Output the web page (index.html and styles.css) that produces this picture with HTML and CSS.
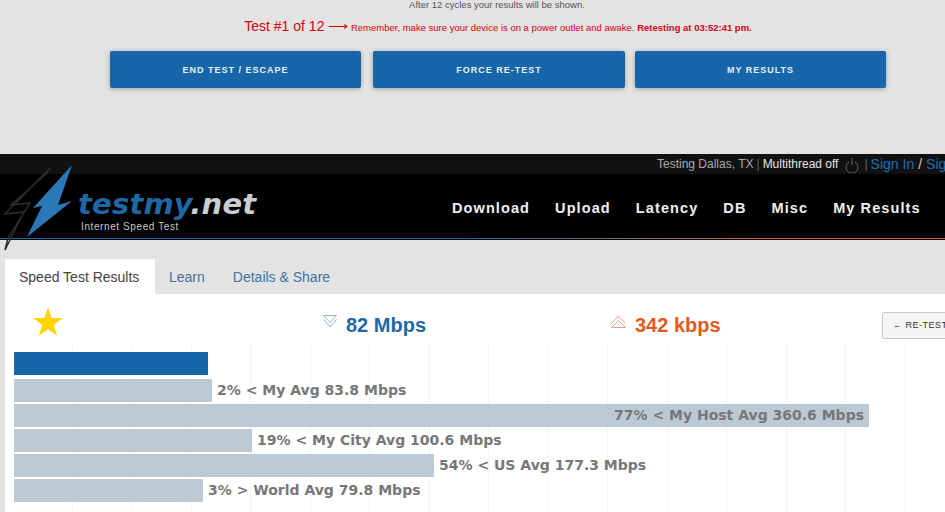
FILE: index.html
```html
<!DOCTYPE html>
<html lang="en">
<head>
<meta charset="utf-8">
<title>testmy.net</title>
<link rel="stylesheet" href="styles.css">
</head>
<body>
<section class="status">
  <p class="after">After 12 cycles your results will be shown.</p>
  <p class="notice"><span class="count">Test #1 of 12 ⟶</span> Remember, make sure your device is on a power outlet and awake. <b>Retesting at 03:52:41 pm.</b></p>
  <div class="actions">
    <a class="btn">END TEST / ESCAPE</a>
    <a class="btn">FORCE RE-TEST</a>
    <a class="btn">MY RESULTS</a>
  </div>
</section>
<header class="header">
  <div class="topbar">
    <span>Testing Dallas, TX</span><span class="sep">|</span><span class="white">Multithread off</span>
    <svg class="power" viewBox="0 0 14 16" width="14" height="16"><path d="M4 5a6 6 0 1 0 6 0M7 1v7" fill="none" stroke="#666" stroke-width="1"/></svg>
    <span class="sep">|</span><a class="link">Sign In</a><span class="slash">/</span><a class="link">Sign Up</a>
  </div>
  <div class="mainbar">
    <nav class="nav">
      <a>Download</a><a>Upload</a><a>Latency</a><a>DB</a><a>Misc</a><a>My Results</a>
    </nav>
  </div>
  <div class="logo">
    <svg class="bolt" viewBox="0 0 76 90" width="76" height="90">
      <path d="M50 18 5 64 24 62 5 100 8 88 30 53 11 55 46 24Z" fill="none" stroke="#2c2c2c" stroke-width="1.5" transform="translate(0 -14)"/>
      <path d="M72 1 58 41 72 37 27 73 42 42 33 44Z" fill="#2a78b8"/>
    </svg>
    <span class="brand"><span class="brand-a">testmy</span><span class="brand-b">.net</span></span>
    <span class="tag">Internet Speed Test</span>
  </div>
</header>
<main class="content">
  <div class="tabs">
    <a class="tab active">Speed Test Results</a>
    <a class="tab">Learn</a>
    <a class="tab">Details &amp; Share</a>
  </div>
  <div class="panel">
    <div class="summary">
      <svg class="star" viewBox="0 0 30 30" width="30" height="30"><path d="M15 0l3.6 11H30l-9.3 6.8L24.3 29 15 22.200 5.700 29l3.600-11.200L0 11h11.400Z" fill="#ffd400"/></svg>
      <div class="speed down">
        <svg viewBox="0 0 14 13" width="14" height="13"><path d="M.5.500h13L7 7.500ZM.5 4.500 7 12l6.500-7.500" fill="none" stroke="#8fb0cc"/></svg>
        <span>82 Mbps</span>
      </div>
      <div class="speed up">
        <svg viewBox="0 0 15 13" width="15" height="13"><path d="M.5 12.500h14L7.500 5.500ZM.5 8.500 7.500 1l7 7.500" fill="none" stroke="#eda184"/></svg>
        <span>342 kbps</span>
      </div>
      <a class="retest">← RE-TEST</a>
    </div>
    <div class="chart">
      <div class="row main"><div class="bar blue" style="width:194px"></div></div>
      <div class="row"><div class="bar" style="width:198px"></div><span class="label">2% &lt; My Avg 83.8 Mbps</span></div>
      <div class="row"><div class="bar" style="width:855px"><span class="label inside">77% &lt; My Host Avg 360.6 Mbps</span></div></div>
      <div class="row"><div class="bar" style="width:238px"></div><span class="label">19% &lt; My City Avg 100.6 Mbps</span></div>
      <div class="row"><div class="bar" style="width:420px"></div><span class="label">54% &lt; US Avg 177.3 Mbps</span></div>
      <div class="row"><div class="bar" style="width:189px"></div><span class="label">3% &gt; World Avg 79.8 Mbps</span></div>
    </div>
  </div>
</main>
</body>
</html>
```
FILE: styles.css
```css
* { box-sizing: border-box; }
html, body { margin: 0; height: 512px; overflow: hidden; }
body { width: 945px; background: #e3e3e3; font-family: "Liberation Sans", Arial, sans-serif; }
p { margin: 0; }

.status { height: 154px; text-align: center; }
.after { width: 996px; height: 10px; font-size: 9.500px; line-height: 9px; color: #555; margin-left: -1px; white-space: nowrap; width: 996px; }
.notice { margin-top: 7px; font-size: 9.500px; line-height: 18px; color: #d8000f; white-space: nowrap; width: 996px; }
.count { font-size: 14px; }
.actions { display: flex; gap: 12px; margin: 14px 0 0 110px; }
.btn { display: flex; align-items: center; justify-content: center; width: 251px; height: 37px; background: #1766a9; color: #e8f1f8; font-size: 9px; font-weight: bold; letter-spacing: 1px; border-radius: 2px; box-shadow: 0 1px 5px rgba(0,0,0,.3); }
.btn:nth-child(2) { width: 252px; margin-right: -2px; }

.header { position: relative; height: 86px; background: #000; }
.topbar { display: flex; align-items: center; justify-content: flex-start; height: 20px; padding-left: 657px; background: #111; color: #aaa; font-size: 12px; white-space: nowrap; }
.sep { margin: 0 3px; color: #666; }
.white { color: #e6e6e6; }
.power { margin: 2px 2px 0 7px; flex: none; }
.link { color: #1f6fb5; font-size: 14px; }
.slash { margin: 0 4px; color: #ccc; font-size: 14px; }
.mainbar { height: 66px; padding-top: 25px; border-bottom: 1px solid #000; position: relative; }
.mainbar::after { content: ""; position: absolute; left: 0; right: 0; bottom: 0; height: 1px; background: linear-gradient(90deg, #1e6aa8, #1e6aa8 50%, #c86a36 80%, #c86a36); }
.nav { display: flex; gap: 25px; margin-left: 452px; }
.nav a { color: #f0f0f0; font-size: 14.500px; font-weight: bold; letter-spacing: 1.100px; line-height: 18px; white-space: nowrap; }

.logo { position: absolute; left: 0; top: 10px; width: 260px; height: 90px; }
.bolt { position: absolute; left: 0; top: 0; overflow: visible; }
.brand { position: absolute; left: 78px; top: 22px; font-family: "DejaVu Sans", sans-serif; font-size: 29px; font-weight: bold; font-style: italic; line-height: 36px; white-space: nowrap; letter-spacing: .2px; }
.brand-a { color: #1f68a6; }
.brand-b { color: #c9ced2; }
.tag { position: absolute; left: 81px; top: 56px; color: #c8c8c8; font-size: 10px; letter-spacing: .6px; line-height: 13px; white-space: nowrap; }

.content { padding: 19px 0 0 5px; }
.tabs { display: flex; height: 35px; }
.tab { display: flex; align-items: center; padding: 0 14px; font-size: 14px; color: #3f74a8; white-space: nowrap; }
.tab.active { width: 150px; margin-right: 0; background: #fff; color: #444; border-radius: 2px 2px 0 0; }
.panel { height: 220px; background: #fff; }
.summary { position: relative; height: 50px; }
.star { position: absolute; left: 28px; top: 13px; }
.speed { position: absolute; top: 19px; display: flex; align-items: flex-start; font-size: 20px; font-weight: bold; line-height: 24px; white-space: nowrap; }
.speed svg { margin: 2px 9px 0 0; }
.speed.down { left: 318px; color: #1f68a6; }
.speed.up { left: 606px; color: #e25a1c; }
.retest { position: absolute; left: 877px; top: 18px; width: 90px; height: 27px; padding-left: 10px; background: #f5f5f5; border: 1px solid #c8c8c8; border-radius: 2px; font-size: 9px; line-height: 25px; color: #333; letter-spacing: .5px; white-space: nowrap; }
.chart { margin-left: 9px; padding-top: 8px; height: 170px; background: repeating-linear-gradient(90deg, transparent 0, transparent 58.500px, #f4f4f4 58.500px, #f4f4f4 59.500px); background-position: -1px 0; }
.row { display: flex; align-items: center; height: 25px; }
.row.main { height: 23px; margin-bottom: 3px; }
.row .bar { height: 23px; background: #bbc9d4; flex: none; }
.row .bar.blue { background: #1766a9; }
.label { margin-left: 5px; color: #777; font-family: "DejaVu Sans", sans-serif; font-size: 14px; font-weight: bold; line-height: 23px; white-space: nowrap; }
.bar .inside { display: block; text-align: right; margin: 0 5px 0 0; }
```
